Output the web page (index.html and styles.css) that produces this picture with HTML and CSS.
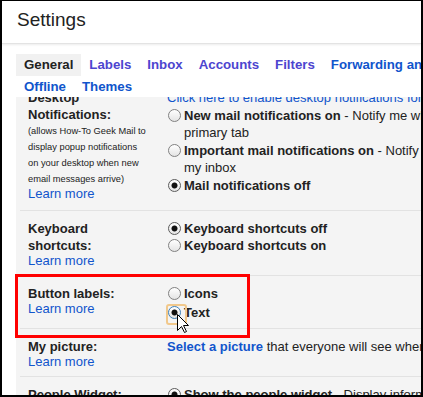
FILE: index.html
```html
<!DOCTYPE html>
<html lang="en">
<head>
    <meta charset="UTF-8">
    <meta name="viewport" content="width=device-width, initial-scale=1.0">
    <title>Settings</title>
    <link rel="stylesheet" href="styles.css">
</head>
<body>
    <div class="frame">
        <header class="header">
            <h1>Settings</h1>
        </header>

        <nav class="tabs">
            <div class="tab-row">
                <a class="tab active" href="#">General</a>
                <a class="tab visited" href="#">Labels</a>
                <a class="tab visited" href="#">Inbox</a>
                <a class="tab visited" href="#">Accounts</a>
                <a class="tab visited" href="#">Filters</a>
                <a class="tab" href="#">Forwarding and POP/IMAP</a>
                <a class="tab" href="#">Chat</a>
            </div>
            <div class="tab-row">
                <a class="tab" href="#">Offline</a>
                <a class="tab" href="#">Themes</a>
            </div>
        </nav>

        <div class="content">
            <div class="scroll">
                <div class="row first">
                    <div class="label">
                        <div class="label-title">Desktop<br>Notifications:</div>
                        <div class="note">(allows How-To Geek Mail to<br>display popup notifications<br>on your desktop when new<br>email messages arrive)</div>
                        <a class="learn" href="#">Learn more</a>
                    </div>
                    <div class="options spaced">
                        <a class="link" href="#">Click here to enable desktop notifications for How-To Geek Mail.</a>
                        <div class="option">
                            <span class="radio"></span>
                            <span class="option-text"><b>New mail notifications on</b> - Notify me when new messages arrive in my inbox or<br>primary tab</span>
                        </div>
                        <div class="option">
                            <span class="radio"></span>
                            <span class="option-text"><b>Important mail notifications on</b> - Notify me only when important messages arrive in<br>my inbox</span>
                        </div>
                        <div class="option">
                            <span class="radio checked"></span>
                            <span class="option-text"><b>Mail notifications off</b></span>
                        </div>
                    </div>
                </div>

                <div class="row">
                    <div class="label">
                        <div class="label-title">Keyboard<br>shortcuts:</div>
                        <a class="learn" href="#">Learn more</a>
                    </div>
                    <div class="options">
                        <div class="option">
                            <span class="radio checked"></span>
                            <span class="option-text"><b>Keyboard shortcuts off</b></span>
                        </div>
                        <div class="option">
                            <span class="radio"></span>
                            <span class="option-text"><b>Keyboard shortcuts on</b></span>
                        </div>
                    </div>
                </div>

                <div class="row">
                    <div class="label">
                        <div class="label-title">Button labels:</div>
                        <a class="learn" href="#">Learn more</a>
                    </div>
                    <div class="options">
                        <div class="option">
                            <span class="radio"></span>
                            <span class="option-text"><b>Icons</b></span>
                        </div>
                        <div class="option focused">
                            <span class="radio checked focus"></span>
                            <span class="option-text"><b>Text</b></span>
                            <!-- mouse pointer -->
                            <svg class="cursor" width="13" height="20" viewBox="0 0 13 20">
                                <path d="M0.5 0.5 V16.5 L4.5 12.5 L7.5 18.5 L9.5 17.5 L6.5 11.5 H11.5 Z" fill="#fff" stroke="#000" stroke-width="1" stroke-linejoin="miter"/>
                            </svg>
                        </div>
                    </div>
                </div>

                <div class="row">
                    <div class="label">
                        <div class="label-title">My picture:</div>
                        <a class="learn" href="#">Learn more</a>
                    </div>
                    <div class="options">
                        <div class="option-text"><a class="link strong" href="#">Select a picture</a> that everyone will see when you send them email.</div>
                    </div>
                </div>

                <div class="row">
                    <div class="label">
                        <div class="label-title">People Widget:</div>
                    </div>
                    <div class="options">
                        <div class="option">
                            <span class="radio checked"></span>
                            <span class="option-text"><b>Show the people widget</b> - Display information about the participants</span>
                        </div>
                    </div>
                </div>
            </div>
        </div>

        <div class="callout"></div>
    </div>
</body>
</html>
```

FILE: styles.css
```css
* {
    margin: 0;
    padding: 0;
    box-sizing: border-box;
}

html, body {
    height: 100%;
}

body {
    font-family: 'Liberation Sans', Arial, sans-serif;
    font-size: 13px;
    color: #222;
    background: #fff;
}

.frame {
    position: relative;
    height: 100vh;
    display: flex;
    flex-direction: column;
    border: 2px solid #000;
    border-top-width: 1px;
    overflow: hidden;
}

.header {
    padding: 7px 0 11px 15px;
    border-bottom: 1px solid #e3e3e3;
    box-shadow: 0 1px 2px rgba(0, 0, 0, 0.08);
}

.header h1 {
    font-size: 19px;
    font-weight: normal;
    line-height: 24px;
}

.tabs {
    padding: 10px 0 0 14px;
}

.tab-row {
    display: flex;
    white-space: nowrap;
}

.tab {
    display: block;
    padding: 0 8px;
    font-size: 13.25px;
    font-weight: bold;
    line-height: 22px;
    color: #15c;
    text-decoration: none;
}

.tab-row + .tab-row .tab {
    line-height: 21px;
}

.tab.active {
    background: #f1f1f1;
    color: #222;
}

.tab.visited {
    color: #4d45cf;
}

.content {
    flex: 1;
    margin-left: 14px;
    background: #f4f4f4;
    overflow: hidden;
}

.scroll {
    margin-top: -17px;
}

.row {
    display: flex;
    margin-left: 4px;
    padding: 9px 0 7px 8px;
    border-top: 1px solid #e2e2e2;
    white-space: nowrap;
}

.row.first {
    border-top: none;
    padding-bottom: 9px;
}

.label {
    width: 139px;
    flex-shrink: 0;
}

.label-title {
    font-weight: bold;
    line-height: 17px;
}

.note {
    font-size: 9.3px;
    line-height: 16px;
}

.learn {
    display: block;
    line-height: 14px;
    color: #15c;
    text-decoration: none;
}

.options {
    display: flex;
    flex-direction: column;
}

.options.spaced {
    gap: 1px;
}

.option {
    position: relative;
    display: flex;
    align-items: flex-start;
}

.option.focused {
    margin-top: 2px;
}

.option-text {
    line-height: 17px;
}

.radio {
    position: relative;
    flex-shrink: 0;
    width: 13px;
    height: 13px;
    margin: 2px 3px 0 1px;
    border: 1px solid #818181;
    border-radius: 50%;
    background: linear-gradient(#fff, #e4e4e4);
}

.radio.checked {
    border-color: #5c5c5c;
    background: radial-gradient(circle, #111 0 2.6px, transparent 3.4px), linear-gradient(#fff, #e4e4e4);
}

.radio.focus {
    border-color: #3d7eb5;
}

.radio.focus::before {
    content: '';
    position: absolute;
    left: -3px;
    top: -3px;
    width: 17px;
    height: 17px;
    border: 2px solid #f1c88b;
    border-radius: 3px;
}

.link {
    color: #15c;
    line-height: 17px;
    text-decoration: none;
}

.link.strong {
    font-weight: bold;
}

.cursor {
    position: absolute;
    left: 10px;
    top: 10px;
}

.callout {
    position: absolute;
    left: 13px;
    top: 273px;
    width: 235px;
    height: 64px;
    border: 3px solid #f00;
}
```
